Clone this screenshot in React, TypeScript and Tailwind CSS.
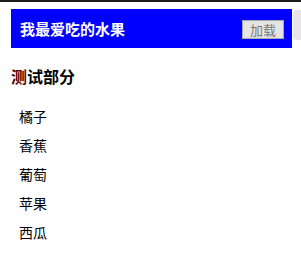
export default function App() {
  const fruits = ["橘子", "香蕉", "葡萄", "苹果", "西瓜"];
  return (
    <div className="w-[301px] h-[271px] bg-white font-['Noto_Sans_CJK_SC',sans-serif] border-t-2 border-[#1c1c1c]">
      <div className="flex items-start pt-[7px] pl-[11px]">
        <div className="flex h-[39px] w-[282px] items-center justify-between bg-[#0000ff] pl-[9px] pr-[8px]">
          <span className="text-[15px] font-bold leading-none text-white">我最爱吃的水果</span>
          <button className="mt-[1px] flex h-[19px] w-[42px] items-center justify-center border border-[#a8a8a8] bg-[#e4e4e4] text-[13px] leading-none text-[#7a7a7a]">
            加载
          </button>
        </div>
        <div className="ml-[1px] mt-[1px] h-[30px] w-[8px] rounded-tl-[4px] rounded-bl-[4px] bg-[#e6e6e6]" />
      </div>
      <h2 className="mt-[20px] ml-[11px] text-[16px] font-bold leading-none text-black">
        <span className="text-[#5c0000]">测</span>试部分
      </h2>
      <ul className="mt-[25px] ml-[19px] flex flex-col gap-[15px]">
        {fruits.map((f) => (
          <li key={f} className="text-[14px] leading-[14px] text-black">
            {f}
          </li>
        ))}
      </ul>
    </div>
  );
}
